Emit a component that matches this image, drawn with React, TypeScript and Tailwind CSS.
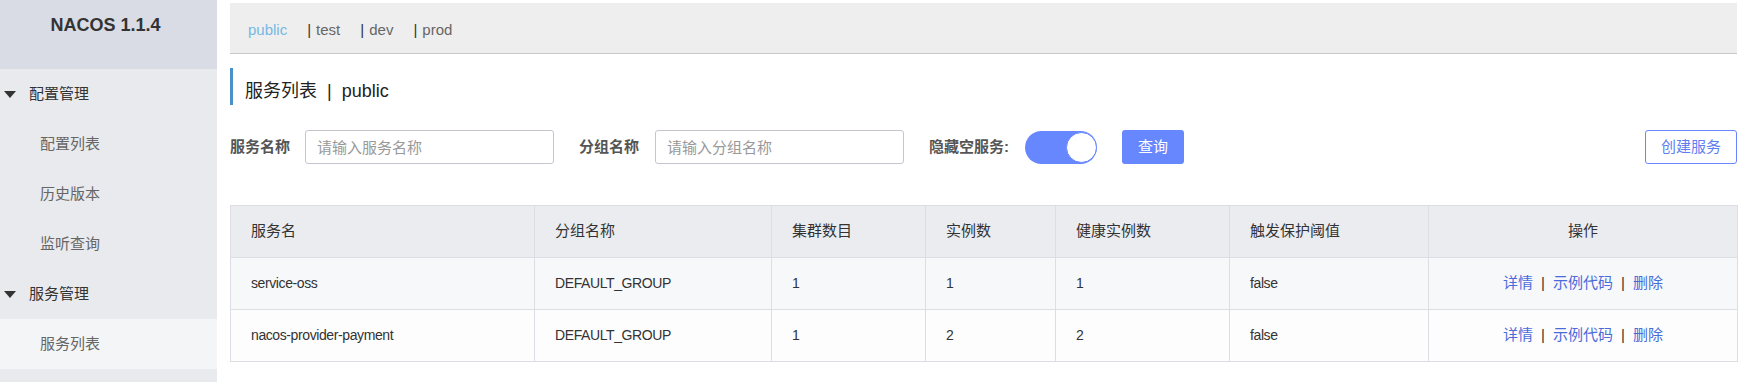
const font = { fontFamily: '"Liberation Sans", "Noto Sans CJK SC", sans-serif' };

const menu = [
  { label: "配置管理", group: true },
  { label: "配置列表" },
  { label: "历史版本" },
  { label: "监听查询" },
  { label: "服务管理", group: true },
  { label: "服务列表", active: true },
];

const namespaces = ["test", "dev", "prod"];

const columns = [
  { label: "服务名", width: 304 },
  { label: "分组名称", width: 237 },
  { label: "集群数目", width: 154 },
  { label: "实例数", width: 130 },
  { label: "健康实例数", width: 174 },
  { label: "触发保护阈值", width: 199 },
  { label: "操作", width: 309 },
];

const rows = [
  { name: "service-oss", group: "DEFAULT_GROUP", clusters: 1, instances: 1, healthy: 1, threshold: "false" },
  { name: "nacos-provider-payment", group: "DEFAULT_GROUP", clusters: 1, instances: 2, healthy: 2, threshold: "false" },
];

function Caret() {
  return (
    <svg width="12" height="7" viewBox="0 0 12 7" className="shrink-0">
      <path d="M0 0 L12 0 L6 7 Z" fill="#333" />
    </svg>
  );
}

function Sidebar() {
  return (
    <aside className="flex w-[217px] shrink-0 flex-col bg-[#e9eaee]">
      <div className="h-[69px] bg-[#d9dce5] pt-[14px] pr-[6px] text-center text-[18px] font-bold leading-[22px] text-[#333]">
        NACOS 1.1.4
      </div>
      {menu.map((item) =>
        item.group ? (
          <div key={item.label} className="flex h-[50px] items-center gap-[13px] pl-[4px] text-[15px] text-[#333]">
            <Caret />
            <span>{item.label}</span>
          </div>
        ) : (
          <div
            key={item.label}
            className={`flex h-[50px] items-center pl-[40px] text-[15px] text-[#666] ${item.active ? "bg-[#f4f5f7]" : ""}`}
          >
            {item.label}
          </div>
        )
      )}
    </aside>
  );
}

function Links() {
  return (
    <span className="text-[15px]">
      <a className="text-[#4a6cdb]">详情</a>
      <span className="mx-[8px] text-[#333]">|</span>
      <a className="text-[#4a6cdb]">示例代码</a>
      <span className="mx-[8px] text-[#333]">|</span>
      <a className="text-[#4a6cdb]">删除</a>
    </span>
  );
}

export default function App() {
  return (
    <div className="flex h-screen w-full bg-white" style={font}>
      <Sidebar />

      <main className="flex min-w-0 flex-1 flex-col pl-[13px] pr-[6px]">
        {/* namespace bar */}
        <div className="mt-[3px] flex h-[51px] items-center gap-[20px] border-b border-[#c9c9c9] bg-[#eeeeee] pl-[18px] pt-[5px] text-[15px]">
          <span className="text-[#76b8e2]">public</span>
          {namespaces.map((ns) => (
            <span key={ns} className="text-[#666]">
              <span className="mr-[5px] text-[#333]">|</span>
              {ns}
            </span>
          ))}
        </div>

        {/* title */}
        <div className="mt-[14px] flex h-[37px] items-end border-l-[3px] border-[#4a91cb] pb-[2px] pl-[12px] text-[18px] leading-[24px] text-[#222]">
          服务列表
          <span className="mx-[10px]">|</span>
          public
        </div>

        {/* search */}
        <div className="mt-[25px] flex h-[34px] items-center">
          <label className="mr-[14px] w-[61px] text-[15px] font-bold text-[#555]">服务名称</label>
          <input
            placeholder="请输入服务名称"
            className="h-[34px] w-[249px] rounded-[3px] border border-[#c4c6cf] px-[11px] text-[15px] placeholder:text-[#999] outline-none"
          />
          <label className="ml-[25px] mr-[14px] w-[62px] text-[15px] font-bold text-[#555]">分组名称</label>
          <input
            placeholder="请输入分组名称"
            className="h-[34px] w-[249px] rounded-[3px] border border-[#c4c6cf] px-[11px] text-[15px] placeholder:text-[#999] outline-none"
          />
          <label className="ml-[25px] mr-[14px] w-[82px] whitespace-nowrap text-[15px] font-bold text-[#555]">隐藏空服务:</label>
          <div className="relative h-[33px] w-[72px] rounded-full bg-[#6787fe]">
            <div className="absolute right-0 top-[1px] h-[31px] w-[31px] rounded-full border border-[#6787fe] bg-white" />
          </div>
          <button className="ml-[25px] h-[34px] w-[62px] rounded-[3px] bg-[#6787fe] text-[15px] text-white">查询</button>
          <button className="ml-auto h-[34px] w-[92px] rounded-[3px] border border-[#6787fe] bg-white text-[15px] text-[#5f7ff0]">
            创建服务
          </button>
        </div>

        {/* table */}
        <table className="mt-[41px] w-full table-fixed border-collapse border border-[#dcdee3] text-[#333]">
          <colgroup>
            {columns.map((c) => (
              <col key={c.label} style={{ width: c.width }} />
            ))}
          </colgroup>
          <thead>
            <tr className="h-[52px] bg-[#ebecf0]">
              {columns.map((c, i) => (
                <th
                  key={c.label}
                  className={`border border-[#dcdee3] px-[20px] text-[15px] font-normal ${i === columns.length - 1 ? "text-center" : "text-left"}`}
                >
                  {c.label}
                </th>
              ))}
            </tr>
          </thead>
          <tbody>
            {rows.map((r, idx) => (
              <tr
                key={r.name}
                className={`h-[52px] text-[14px] tracking-[-0.4px] ${idx === 0 ? "bg-[#f7f8fa]" : "bg-[#fdfdfd]"}`}
              >
                <td className="border border-[#dcdee3] px-[20px]">{r.name}</td>
                <td className="border border-[#dcdee3] px-[20px]">{r.group}</td>
                <td className="border border-[#dcdee3] px-[20px]">{r.clusters}</td>
                <td className="border border-[#dcdee3] px-[20px]">{r.instances}</td>
                <td className="border border-[#dcdee3] px-[20px]">{r.healthy}</td>
                <td className="border border-[#dcdee3] px-[20px]">{r.threshold}</td>
                <td className="border border-[#dcdee3] px-[20px] text-center tracking-normal">
                  <Links />
                </td>
              </tr>
            ))}
          </tbody>
        </table>
      </main>
    </div>
  );
}
